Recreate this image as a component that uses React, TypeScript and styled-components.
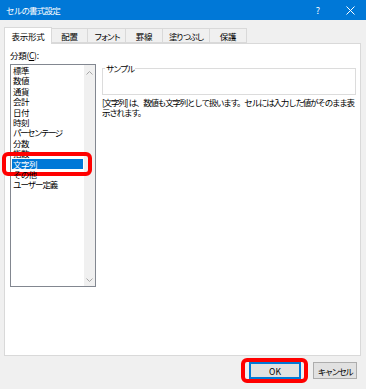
import React from "react";
import styled, { createGlobalStyle } from "styled-components";

const Global = createGlobalStyle`
  html, body { margin: 0; padding: 0; background: #f0f0f0; }
  body {
    font-family: "Noto Sans CJK JP", sans-serif;
    font-size: 8.5px;
    color: #000;
  }
`;

const Window = styled.div`
  width: 366px;
  height: 389px;
  background: #f0f0f0;
  display: flex;
  flex-direction: column;
  overflow: hidden;
`;

const TitleBar = styled.div`
  height: 20px;
  flex: none;
  background: #0078d7;
  color: #fff;
  display: flex;
  align-items: center;
  padding-left: 6px;
`;

const Title = styled.div`
  flex: 1;
  line-height: 20px;
  letter-spacing: -0.8px;
`;

const TitleButton = styled.div`
  width: 32px;
  height: 20px;
  display: flex;
  align-items: center;
  justify-content: center;
  font-size: 9px;
`;

const Body = styled.div`
  flex: none;
  padding: 7px 5px 0 4px;
  display: flex;
  flex-direction: column;
`;

const TabRow = styled.div`
  display: flex;
  align-items: flex-end;
  height: 16px;
  position: relative;
  z-index: 1;
`;

const Tab = styled.div<{ $w: number; $ls: number; $active?: boolean }>`
  width: ${(p) => p.$w}px;
  height: ${(p) => (p.$active ? 17 : 15)}px;
  margin-bottom: ${(p) => (p.$active ? -1 : 0)}px;
  margin-right: -1px;
  box-sizing: border-box;
  border: 1px solid #d9d9d9;
  border-bottom: ${(p) => (p.$active ? "none" : "1px solid #d9d9d9")};
  background: ${(p) => (p.$active ? "#fff" : "#f0f0f0")};
  display: flex;
  align-items: center;
  justify-content: center;
  padding-bottom: ${(p) => (p.$active ? 1 : 0)}px;
  white-space: nowrap;
  letter-spacing: ${(p) => p.$ls}px;
`;

const Panel = styled.div`
  height: 313px;
  box-sizing: border-box;
  border: 1px solid #d9d9d9;
  background: #fff;
  display: grid;
  grid-template-columns: 86px minmax(0, 1fr);
  column-gap: 6px;
  align-items: start;
  padding: 6px 4px 0 5px;
`;

const LeftColumn = styled.div`
  display: flex;
  flex-direction: column;
`;

const FieldLabel = styled.div`
  line-height: 11px;
  height: 11px;
  margin-bottom: 3px;
  letter-spacing: -0.3px;
  u { text-decoration: underline; text-underline-offset: 1px; }
`;

const ListBox = styled.div`
  height: 223px;
  box-sizing: border-box;
  border: 1px solid #828790;
  display: flex;
`;

const ListItems = styled.div`
  flex: 1;
  padding: 0 1px;
`;

const ListItem = styled.div<{ $selected?: boolean; $ls: number }>`
  position: relative;
  height: 10.4px;
  line-height: 10.4px;
  padding-left: 1px;
  white-space: nowrap;
  letter-spacing: ${(p) => p.$ls}px;
  background: ${(p) => (p.$selected ? "#0078d7" : "transparent")};
  color: ${(p) => (p.$selected ? "#fff" : "#000")};
`;

const ScrollBar = styled.div`
  width: 11px;
  background: #f0f0f0;
  display: flex;
  flex-direction: column;
  justify-content: space-between;
  align-items: center;
  padding: 6px 0 4px;
`;

const RightColumn = styled.div`
  display: flex;
  flex-direction: column;
  min-width: 0;
`;

const GroupBox = styled.fieldset`
  margin: 13px 0 0 0;
  padding: 0;
  min-width: 0;
  height: 32px;
  box-sizing: border-box;
  border: 1px solid #dcdcdc;
`;

const GroupLegend = styled.legend`
  margin-left: 2px;
  padding: 0 1px;
  line-height: 11px;
  font-size: 8.5px;
  letter-spacing: -1.5px;
`;

const Description = styled.div`
  margin-top: 2px;
  line-height: 10px;
  white-space: nowrap;
  letter-spacing: -1.2px;
`;

const Footer = styled.div`
  flex: 1;
  display: flex;
  justify-content: flex-end;
  align-items: flex-start;
  padding: 6px 9px 0 0;
  gap: 12px;
`;

const Button = styled.div<{ $default?: boolean; $w: number; $ls: number }>`
  position: relative;
  width: ${(p) => p.$w}px;
  height: 17px;
  box-sizing: border-box;
  border: 1px solid ${(p) => (p.$default ? "#0078d7" : "#adadad")};
  box-shadow: ${(p) => (p.$default ? "inset 0 0 0 1px #0078d7" : "none")};
  background: #e1e1e1;
  display: flex;
  align-items: center;
  justify-content: center;
  white-space: nowrap;
  letter-spacing: ${(p) => p.$ls}px;
`;

const Highlight = styled.div<{ $inset: string }>`
  position: absolute;
  inset: ${(p) => p.$inset};
  border: 4px solid #ff0000;
  border-radius: 6px;
  pointer-events: none;
`;

const Chevron = ({ up }: { up?: boolean }) => (
  <svg width="7" height="4" viewBox="0 0 7 4">
    <polyline
      points={up ? "0.5,3.5 3.5,0.5 6.5,3.5" : "0.5,0.5 3.5,3.5 6.5,0.5"}
      fill="none"
      stroke="#a6a6a6"
      strokeWidth="1"
    />
  </svg>
);

const CloseIcon = () => (
  <svg width="9" height="9" viewBox="0 0 9 9">
    <path d="M0.5 0.5 L8.5 8.5 M8.5 0.5 L0.5 8.5" stroke="#fff" strokeWidth="1" />
  </svg>
);

const tabs = [
  { label: "表示形式", w: 48, ls: -0.3, active: true },
  { label: "配置", w: 37, ls: -0.3 },
  { label: "フォント", w: 39, ls: -2.3 },
  { label: "罫線", w: 38, ls: -0.3 },
  { label: "塗りつぶし", w: 48, ls: -1.7 },
  { label: "保護", w: 38, ls: -0.3 },
];

const categories = [
  { label: "標準", ls: -0.5 },
  { label: "数値", ls: -0.5 },
  { label: "通貨", ls: -0.5 },
  { label: "会計", ls: -0.5 },
  { label: "日付", ls: -0.5 },
  { label: "時刻", ls: -0.5 },
  { label: "パーセンテージ", ls: -1.5 },
  { label: "分数", ls: -0.5 },
  { label: "指数", ls: -0.5 },
  { label: "文字列", ls: -0.5 },
  { label: "その他", ls: -0.8 },
  { label: "ユーザー定義", ls: -1.1 },
];

export default function App() {
  return (
    <>
      <Global />
      <Window>
        <TitleBar>
          <Title>セルの書式設定</Title>
          <TitleButton>?</TitleButton>
          <TitleButton>
            <CloseIcon />
          </TitleButton>
        </TitleBar>
        <Body>
          <TabRow>
            {tabs.map((t) => (
              <Tab key={t.label} $w={t.w} $ls={t.ls} $active={t.active}>
                {t.label}
              </Tab>
            ))}
          </TabRow>
          <Panel>
            <LeftColumn>
              <FieldLabel>
                分類(<u>C</u>):
              </FieldLabel>
              <ListBox>
                <ListItems>
                  {categories.map((c) => (
                    <ListItem key={c.label} $ls={c.ls} $selected={c.label === "文字列"}>
                      {c.label}
                      {c.label === "文字列" && <Highlight $inset="-6.5px -9px -7px -10px" />}
                    </ListItem>
                  ))}
                </ListItems>
                <ScrollBar>
                  <Chevron up />
                  <Chevron />
                </ScrollBar>
              </ListBox>
            </LeftColumn>
            <RightColumn>
              <GroupBox>
                <GroupLegend>サンプル</GroupLegend>
              </GroupBox>
              <Description>
                [文字列]&nbsp;&nbsp;は、数値も文字列として扱います。セルには入力した値がそのまま表
                <br />
                示されます。
              </Description>
            </RightColumn>
          </Panel>
        </Body>
        <Footer>
          <Button $default $w={52} $ls={0}>
            OK
            <Highlight $inset="-5px -8px -5px -9px" />
          </Button>
          <Button $w={44} $ls={-1.6}>
            キャンセル
          </Button>
        </Footer>
      </Window>
    </>
  );
}
